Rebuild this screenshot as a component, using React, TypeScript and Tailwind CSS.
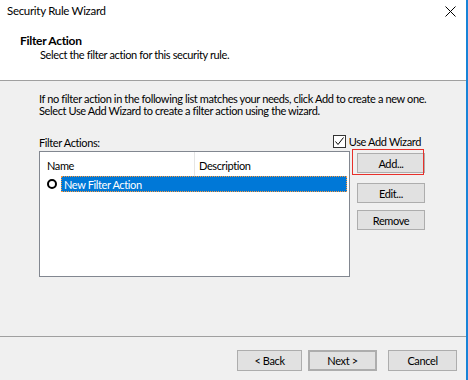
export default function App() {
  const btn =
    "flex items-center justify-center bg-[#e1e1e1] border border-[#adadad] text-black leading-none";
  return (
    <div className="relative w-[468px] h-[380px] flex bg-[#f0f0f0] overflow-hidden font-['Lato',sans-serif] text-[11px] tracking-[-0.38px] text-black">
      <div className="w-[466px] min-w-0 flex flex-col">
        {/* header */}
        <div className="h-[81px] bg-white border-b border-[#a0a0a0] flex flex-col">
          <div className="h-[22px] flex items-center justify-between pl-[7px] pr-[10px] text-[11.5px] tracking-[-0.3px]">
            <span>Security Rule Wizard</span>
            <svg width="11" height="11" viewBox="0 0 11 11">
              <path d="M0.5 0.5 L10.5 10.5 M10.5 0.5 L0.5 10.5" stroke="#000" strokeWidth="1" />
            </svg>
          </div>
          <div className="pl-[20px] pt-[12px]">
            <div className="font-bold leading-[14px] text-[12px] tracking-[-0.3px]">Filter Action</div>
            <div className="pl-[20px] leading-[14px]">Select the filter action for this security rule.</div>
          </div>
        </div>

        {/* body */}
        <div className="flex-1 pl-[39px] pt-[12px]">
          <div className="leading-[12px] whitespace-nowrap">
            <div>If no filter action in the following list matches your needs, click Add to create a new one.</div>
            <div>Select Use Add Wizard to create a filter action using the wizard.</div>
          </div>

          <div className="mt-[18px] w-[387px] flex items-center h-[13px]">
            <span className="leading-[14px] translate-y-[1px]">Filter Actions:</span>
            <label className="ml-auto mr-[5px] flex items-center gap-[3px]">
              <span className="w-[13px] h-[13px] border border-[#333] bg-white flex items-center justify-center">
                <svg width="11" height="11" viewBox="0 0 11 11">
                  <path d="M1.5 5.5 L4 8.5 L9.5 1.5" fill="none" stroke="#000" strokeWidth="1" />
                </svg>
              </span>
              <span className="leading-[14px]">Use Add Wizard</span>
            </label>
          </div>

          <div className="mt-[3px] flex">
            <div className="w-[311px] h-[126px] bg-white border border-[#828790] flex flex-col">
              <div className="h-[24px] flex items-stretch">
                <div className="w-[155px] pl-[7px] pt-[4px] flex items-center border-r border-[#e5e5e5]">Name</div>
                <div className="pl-[4px] pt-[4px] flex items-center">Description</div>
              </div>
              <div className="h-[16px] flex items-center">
                <div className="w-[21px] pl-[7px] flex items-center">
                  <span className="w-[10px] h-[10px] rounded-full border-2 border-black" />
                </div>
                <div className="w-[286px] h-[16px] bg-[#0078d7] border border-dotted border-[#ff9a3c] text-white pl-[2px] flex items-center leading-none">
                  New Filter Action
                </div>
              </div>
            </div>

            <div className="ml-[7px] mt-[2px] flex flex-col">
              <div className={`${btn} w-[68px] h-[20px]`}>Add...</div>
              <div className={`${btn} w-[68px] h-[20px] mt-[10px]`}>Edit...</div>
              <div className={`${btn} w-[68px] h-[20px] mt-[7px]`}>Remove</div>
            </div>
          </div>
        </div>

        {/* footer */}
        <div className="h-[44px] border-t border-[#a0a0a0] flex justify-end items-start pt-[13px] pr-[9px]">
          <div className={`${btn} w-[65px] h-[21px]`}>&lt; Back</div>
          <div className={`${btn} w-[69px] h-[21px] ml-[6px] border-2 border-[#0078d7]`}>Next &gt;</div>
          <div className={`${btn} w-[69px] h-[21px] ml-[11px]`}>Cancel</div>
        </div>
      </div>
      <div className="w-[2px] bg-[#1883d7]" />

      {/* annotation highlight */}
      <div className="absolute left-[352px] top-[149px] w-[72px] h-[26px] border border-[#e8302a] pointer-events-none" />
    </div>
  );
}
